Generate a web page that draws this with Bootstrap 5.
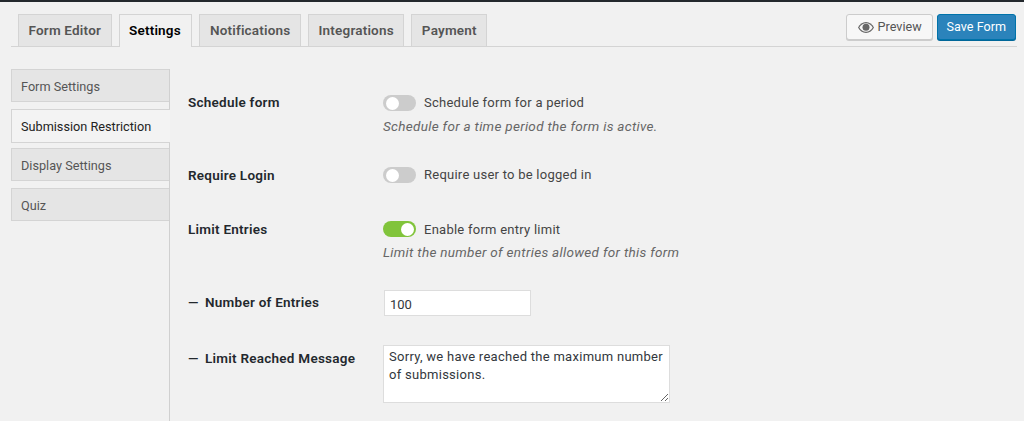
<!DOCTYPE html>
<html lang="en">
<head>
    <meta charset="UTF-8">
    <title>Form Settings</title>
    <link href="https://cdn.jsdelivr.net/npm/bootstrap@5.3.3/dist/css/bootstrap.min.css" rel="stylesheet">
    <style>
        html, body { height: 421px; overflow: hidden; }
        body { background: #f1f1f1; color: #444; font-family: Roboto, "Liberation Sans", sans-serif; font-size: 13px; border-top: 2px solid #23282d; }
        .top-wrap { padding: 12px 7px 0 11px; }
        .tab-bar { border-bottom: 1px solid #d4d4d4; height: 33px; padding-left: 7px; }
        .tab-list { gap: 7px; }
        .tab-item { height: 32px; padding: 0 9.5px; border: 1px solid #d4d4d4; border-bottom: 0; background: #e5e5e5; color: #555; font-weight: 600; font-size: 13.5px; line-height: 31px; letter-spacing: .2px; text-decoration: none; }
        .tab-item.is-on { background: #f1f1f1; color: #000; height: 33px; padding-right: 10.5px; }
        .wp-btn { height: 26px; padding: 0 10px 0 11px; font-size: 12.6px; line-height: 24px; border-radius: 3px; border: 1px solid #ccc; background: #f7f7f7; color: #555; box-shadow: 0 1px 0 #ccc; }
        .wp-btn.is-primary { background: #2b83bb; border-color: #0073aa; color: #fff; padding: 0 9px; box-shadow: 0 1px 0 #006799; margin-right: 1px; }
        .side-col { width: 159px; flex: none; margin-top: 22px; height: 352px; border-right: 1px solid #d0d0d0; }
        .side-item { height: 33px; padding-left: 9px; line-height: 33px; border: 1px solid #d4d4d4; border-right: 0; background: #e5e5e5; color: #555; margin-bottom: 7px; font-size: 12.7px; }
        .side-item.is-on { background: #f3f3f3; color: #222; height: 34px; margin-bottom: 5px; margin-right: -1px; }
        .main-col { padding-left: 18px; }
        .set-row { display: flex; }
        .set-label { width: 195px; flex: none; font-weight: 600; color: #23282d; font-size: 13.5px; letter-spacing: .25px; }
        .dash-mark { display: inline-block; width: 17px; }
        .toggle-line { display: flex; align-items: center; gap: 8px; height: 20px; letter-spacing: .25px; }
        .sw { width: 33px; height: 16px; border-radius: 8px; background: #ccc; position: relative; flex: none; }
        .sw::after { content: ""; position: absolute; left: 3px; top: 1.5px; width: 13px; height: 13px; border-radius: 50%; background: #fff; }
        .sw.is-on { background: #81c43b; }
        .sw.is-on::after { left: 18px; }
        .set-desc { font-style: italic; color: #666; margin-top: 3px; line-height: 20px; font-size: 13.5px; letter-spacing: .3px; }
        .num-box { width: 147px; height: 26px; border: 1px solid #ddd; background: #fff; color: #32373c; padding: 2px 5px 0; font-size: 13px; margin-left: 1px; display: block; font-family: inherit; }
        .msg-box { width: 287px; height: 58px; border: 1px solid #ddd; background: #fff; color: #32373c; padding: 2px 5px; font-size: 13px; line-height: 18px; display: block; font-family: inherit; letter-spacing: .28px; }
    </style>
</head>
<body>
    <div class="top-wrap">
        <div class="tab-bar d-flex align-items-start">
            <div class="tab-list d-flex flex-grow-1">
                <a class="tab-item" href="#">Form Editor</a>
                <a class="tab-item is-on" href="#">Settings</a>
                <a class="tab-item" href="#">Notifications</a>
                <a class="tab-item" href="#">Integrations</a>
                <a class="tab-item" href="#">Payment</a>
            </div>
            <div class="d-flex gap-1">
                <button type="button" class="wp-btn d-flex align-items-center gap-1">
                    <svg width="16" height="11" viewBox="0 0 16 11" aria-hidden="true"><path d="M8 0C4.5 0 1.7 2.2 0 5.5 1.7 8.8 4.5 11 8 11s6.3-2.2 8-5.5C14.3 2.2 11.5 0 8 0z" fill="#666"/><path d="M8 1.2c-2.9 0-5.2 1.8-6.7 4.3 1.5 2.5 3.8 4.3 6.7 4.3s5.2-1.8 6.7-4.3C13.2 3 10.9 1.2 8 1.2z" fill="#f7f7f7"/><circle cx="8" cy="5.2" r="3.5" fill="#666"/></svg>
                    Preview
                </button>
                <button type="button" class="wp-btn is-primary">Save Form</button>
            </div>
        </div>
    </div>
    <div class="d-flex" style="padding-left:11px">
        <div class="side-col">
            <div class="side-item">Form Settings</div>
            <div class="side-item is-on">Submission Restriction</div>
            <div class="side-item">Display Settings</div>
            <div class="side-item">Quiz</div>
        </div>
        <div class="main-col flex-grow-1">
            <div class="set-row" style="margin-top:46px">
                <div class="set-label" style="margin-top:-1px">Schedule form</div>
                <div>
                    <div class="toggle-line"><span class="sw"></span>Schedule form for a period</div>
                    <div class="set-desc">Schedule for a time period the form is active.</div>
                </div>
            </div>
            <div class="set-row" style="margin-top:29px">
                <div class="set-label">Require Login</div>
                <div class="toggle-line"><span class="sw"></span>Require user to be logged in</div>
            </div>
            <div class="set-row" style="margin-top:34px">
                <div class="set-label">Limit Entries</div>
                <div>
                    <div class="toggle-line"><span class="sw is-on"></span>Enable form entry limit</div>
                    <div class="set-desc">Limit the number of entries allowed for this form</div>
                </div>
            </div>
            <div class="set-row align-items-center" style="margin-top:28px">
                <div class="set-label" style="padding-bottom:2px"><span class="dash-mark">—</span>Number of Entries</div>
                <input class="num-box" type="text" value="100">
            </div>
            <div class="set-row" style="margin-top:29px">
                <div class="set-label" style="padding-top:3px"><span class="dash-mark">—</span>Limit Reached Message</div>
                <textarea class="msg-box">Sorry, we have reached the maximum number of submissions.</textarea>
            </div>
        </div>
    </div>
    <script src="https://cdn.jsdelivr.net/npm/bootstrap@5.3.3/dist/js/bootstrap.bundle.min.js"></script>
</body>
</html>
